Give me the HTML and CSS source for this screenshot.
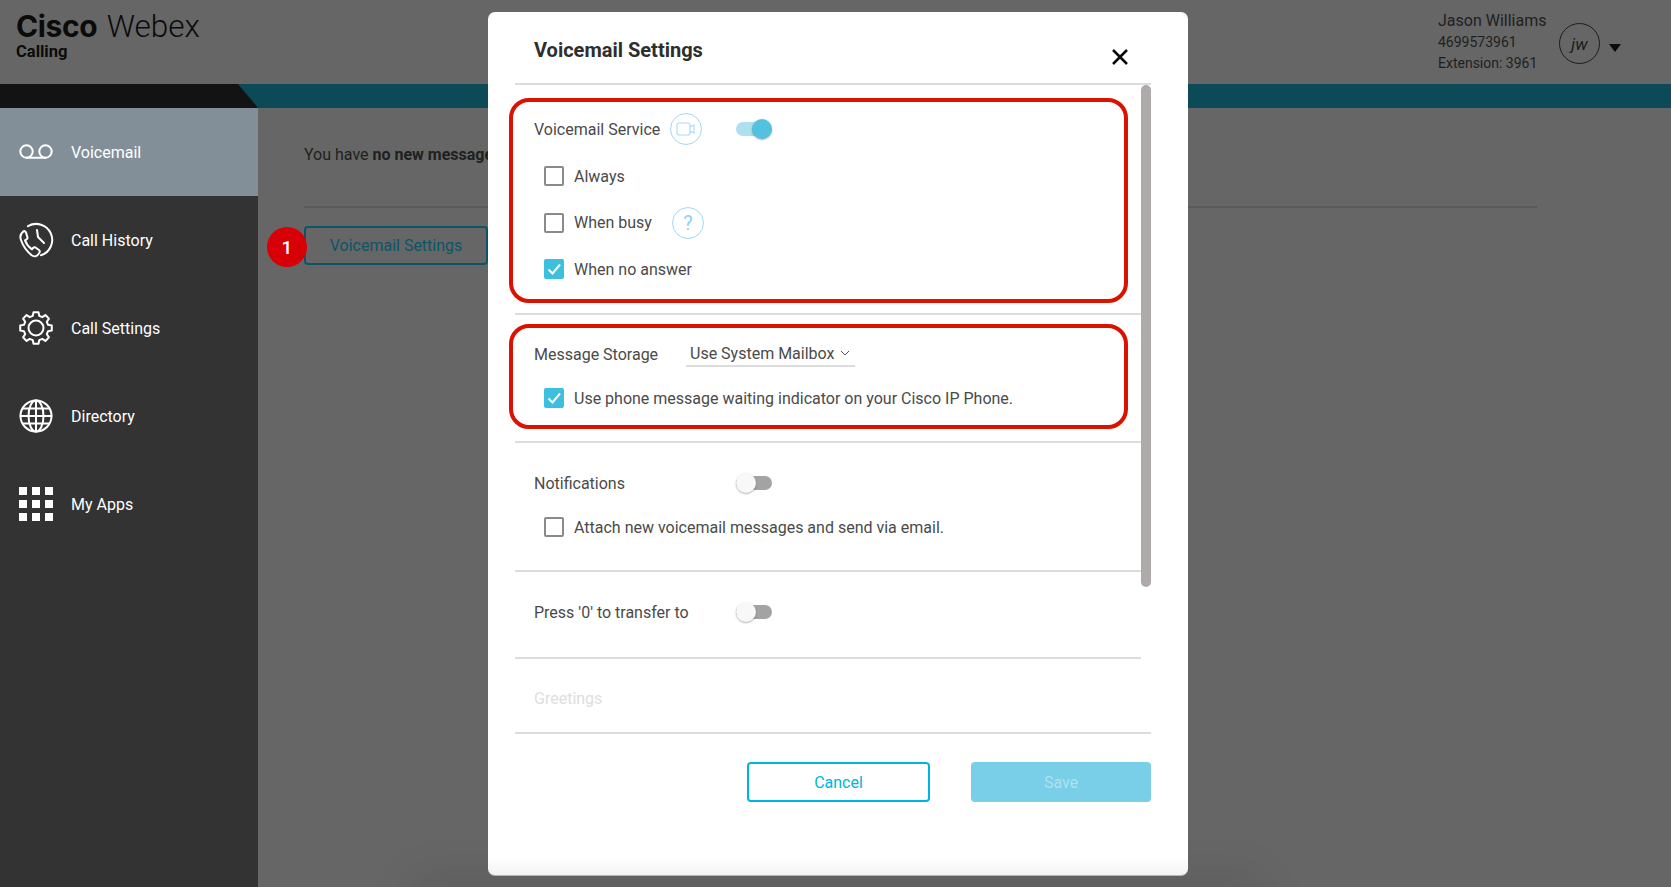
FILE: index.html
```html
<!DOCTYPE html>
<html lang="en">
<head>
<meta charset="utf-8">
<title>Voicemail Settings</title>
<link rel="stylesheet" href="styles.css">
</head>
<body>
<div class="app">
  <header class="topbar">
    <div class="brand">
      <div class="brand-name"><b>Cisco</b> <span>Webex</span></div>
      <div class="brand-sub">Calling</div>
    </div>
    <div class="user">
      <div class="user-info">
        <div class="user-name">Jason Williams</div>
        <div class="user-line">4699573961</div>
        <div class="user-line">Extension: 3961</div>
      </div>
      <div class="avatar">jw</div>
      <div class="caret"></div>
    </div>
  </header>
  <div class="strip"><div class="strip-dark"></div></div>
  <div class="workspace">
    <nav class="sidebar">
      <a class="nav-item active">
        <svg class="nav-icon" viewBox="0 0 34 34"><circle cx="7.500" cy="16.500" r="6.200"/><circle cx="26.500" cy="16.500" r="6.200"/><path d="M7.500 22.700h19"/></svg>
        <span>Voicemail</span>
      </a>
      <a class="nav-item">
        <svg class="nav-icon" viewBox="0 0 34 34"><path d="M9 3.200A16 16 0 1 1 22 32.200"/><path d="M18 7l1 7 6 6"/><path d="M4.500 8.500c-3 2-3.800 5-2.500 8.500 2 6 6 11.500 11 15.500 2.500 1.500 5 1 6.500-1.500l1-1.500c.5-1 .3-1.800-.5-2.500l-3.500-2.500c-1-.5-1.800-.3-2.500.5l-1 1.300c-3-2-5.500-5-7-9l1.500-.8c1-.6 1.200-1.400.9-2.400l-1.400-4.600c-.5-1.300-1.700-1.800-3-1z"/></svg>
        <span>Call History</span>
      </a>
      <a class="nav-item">
        <svg class="nav-icon" viewBox="-17 -17 34 34"><polygon points="12.07,-3.24 15.8,-2.5 15.8,2.5 12.07,3.24 10.83,6.24 12.94,9.4 9.4,12.94 6.24,10.83 3.24,12.07 2.5,15.8 -2.5,15.8 -3.24,12.07 -6.24,10.83 -9.4,12.94 -12.94,9.4 -10.83,6.24 -12.07,3.24 -15.8,2.5 -15.8,-2.5 -12.07,-3.24 -10.83,-6.24 -12.94,-9.4 -9.4,-12.94 -6.24,-10.83 -3.24,-12.07 -2.5,-15.8 2.5,-15.8 3.24,-12.07 6.24,-10.83 9.4,-12.94 12.94,-9.4 10.83,-6.24"/><circle r="7.5"/></svg>
        <span>Call Settings</span>
      </a>
      <a class="nav-item">
        <svg class="nav-icon" viewBox="0 0 34 34"><circle cx="17" cy="17" r="15.500"/><ellipse cx="17" cy="17" rx="7.500" ry="15.500"/><path d="M17 1.500v31M1.500 17h31M4 9.500h26M4 24.500h26"/></svg>
        <span>Directory</span>
      </a>
      <a class="nav-item">
        <div class="apps-grid"><i></i><i></i><i></i><i></i><i></i><i></i><i></i><i></i><i></i></div>
        <span>My Apps</span>
      </a>
    </nav>
    <main class="content">
      <p class="status">You have <b>no new messages</b></p>
      <div class="rule"></div>
      <div class="action"><span class="step">1</span><button class="settings-btn">Voicemail Settings</button></div>
    </main>
  </div>
</div>

<div class="modal">
  <div class="modal-head">
    <h1>Voicemail Settings</h1>
    <svg class="close" viewBox="0 0 16 16"><path d="M1 1l14 14M15 1L1 15"/></svg>
  </div>
  <div class="modal-body">
    <section class="group g1">
      <div class="row">
        <span class="label short">Voicemail Service</span>
        <span class="hint"><svg viewBox="0 0 20 14"><rect x="1" y="1" width="13" height="12" rx="2"/><path d="M14 5l4-2v8l-4-2"/></svg></span>
        <span class="switch on"></span>
      </div>
      <label class="row check"><span class="box"></span>Always</label>
      <label class="row check"><span class="box"></span><span class="busy">When busy</span><span class="hint q">?</span></label>
      <label class="row check"><span class="box checked"><svg viewBox="0 0 20 20"><path d="M4.500 10.500l4 4 7.500-9"/></svg></span>When no answer</label>
    </section>
    <section class="group g2">
      <div class="row">
        <span class="label storage">Message Storage</span>
        <span class="select">Use System Mailbox<svg viewBox="0 0 10 6"><path d="M1 1l4 4 4-4"/></svg></span>
      </div>
      <label class="row check"><span class="box checked"><svg viewBox="0 0 20 20"><path d="M4.500 10.500l4 4 7.500-9"/></svg></span>Use phone message waiting indicator on your Cisco IP Phone.</label>
    </section>
    <section class="group g3">
      <div class="row"><span class="label wide">Notifications</span><span class="switch"></span></div>
      <label class="row check"><span class="box"></span>Attach new voicemail messages and send via email.</label>
    </section>
    <section class="group g4">
      <div class="row"><span class="label wide">Press '0' to transfer to</span><span class="switch"></span></div>
    </section>
    <section class="group g5">
      <div class="row faded">Greetings</div>
    </section>
    <div class="scroll-thumb"></div>
    <div class="callout c1"></div>
    <div class="callout c2"></div>
  </div>
  <div class="modal-foot">
    <button class="btn cancel">Cancel</button>
    <button class="btn save">Save</button>
  </div>
</div>
</body>
</html>
```
FILE: styles.css
```css
* { box-sizing: border-box; }
html, body { margin: 0; height: 100%; overflow: hidden; }
body { font-family: Roboto, "Liberation Sans", sans-serif; background: #666; color: #1c1c1c; }
.app { display: flex; flex-direction: column; height: 887px; }

.topbar { height: 84px; display: flex; justify-content: space-between; }
.brand { padding: 8px 0 0 16px; color: #0b0b0b; }
.brand-name { font-family: Inter, Roboto, sans-serif; font-size: 30px; line-height: 36px; white-space: nowrap; }
.brand-name b { font-weight: 700; letter-spacing: -.4px; }
.brand-name span { font-family: Roboto, sans-serif; font-weight: 300; font-size: 31.500px; margin-left: 1px; }
.brand-sub { font-size: 16.500px; font-weight: 700; line-height: 16px; margin-top: -1px; }
.user { display: flex; align-items: flex-start; padding: 9px 50px 0 0; }
.user-info { width: 121px; color: #1f1f1f; }
.user-name { font-size: 16px; line-height: 23px; }
.user-line { font-size: 14px; line-height: 21px; }
.avatar { width: 41px; height: 41px; border: 1px solid #1c1c1c; border-radius: 50%; display: flex; align-items: center; justify-content: center; font-style: italic; font-size: 17px; margin-top: 14px; }
.caret { width: 0; height: 0; border: 6.500px solid transparent; border-top: 8px solid #0b0b0b; border-bottom: 0; margin: 35px 0 0 9px; }

.strip { height: 24px; background: #0d4a58; }
.strip-dark { width: 258px; height: 24px; background: #131313; clip-path: polygon(0 0, 238px 0, 100% 100%, 0 100%); }

.workspace { flex: 1; display: flex; min-height: 0; }
.sidebar { width: 258px; background: #333; display: flex; flex-direction: column; }
.nav-item { height: 88px; display: flex; align-items: center; gap: 18px; padding-left: 19px; color: #fff; font-size: 16px; }
.nav-item.active { background: #828f99; }
.nav-icon { width: 34px; height: 34px; fill: none; stroke: #fff; stroke-width: 2; stroke-linejoin: round; stroke-linecap: round; flex: none; overflow: visible; }
.apps-grid { width: 34px; display: grid; grid-template-columns: repeat(3, 8px); gap: 5px; flex: none; }
.apps-grid i { width: 8px; height: 8px; background: #fff; }

.content { flex: 1; padding: 37px 134px 0 46px; color: #1f1f1f; }
.status { margin: 0; font-size: 16px; line-height: 20px; }
.rule { height: 2px; background: #5a5a5a; margin-top: 41px; }
.action { position: relative; margin-top: 18px; }
.settings-btn { width: 184px; height: 39px; background: none; border: 2px solid #0d5566; border-radius: 4px; color: #0d5566; font: 16px Roboto, sans-serif; }
.step { position: absolute; left: -37px; top: 1px; width: 40px; height: 40px; border-radius: 50%; background: #d70007; color: #fff; font-weight: 500; font-size: 19px; display: flex; align-items: center; justify-content: center; z-index: 1; }

.modal { position: absolute; left: 488px; top: 12px; width: 700px; height: 864px; background: linear-gradient(#fff 845px, #f3f3f3 863px); border-bottom: 1px solid #b5b5b5; border-radius: 7px; padding: 0 37px 0 27px; color: #4a4a4a; }
.modal::before { content: ""; position: absolute; left: -70px; right: -70px; top: 868px; height: 50px; background: rgba(0,0,0,.1); filter: blur(22px); z-index: -1; }
.modal-head { height: 73px; padding: 24px 0 0 19px; border-bottom: 2px solid #dcdcdc; position: relative; }
.modal-head h1 { margin: 0; font-size: 20px; line-height: 28px; font-weight: 700; color: #2e2e2e; }
.close { position: absolute; left: 597px; top: 37px; width: 16px; height: 16px; fill: none; stroke: #0a0a0a; stroke-width: 2.500; }
.modal-body { position: relative; height: 649px; border-bottom: 2px solid #dcdcdc; }
.group { margin-right: 10px; padding-left: 19px; border-bottom: 2px solid #dcdcdc; }
.g1 { height: 230px; padding-top: 20px; }
.g2 { height: 128px; padding-top: 17px; }
.g3 { height: 129px; padding-top: 18px; }
.g4 { height: 87px; padding-top: 18px; }
.g5 { border: 0; padding-top: 17px; }
.g1 .row { height: 46.500px; }
.g1 .row:first-child { height: 48px; }
.row { height: 44px; display: flex; align-items: center; font-size: 16px; }
.check { padding-left: 10px; }
.box { width: 20px; height: 20px; border: 2px solid #8a8a8a; border-radius: 2px; margin-right: 10px; flex: none; }
.box.checked { background: #3dbfdf; border: 0; }
.box svg { display: block; width: 20px; height: 20px; fill: none; stroke: #fff; stroke-width: 2; }
.label { white-space: nowrap; flex: none; }
.label.short { width: 126px; }
.label.wide { width: 202px; }
.label.storage { width: 152px; }
.hint { width: 32px; height: 32px; border: 1.500px solid #9fd8fb; border-radius: 50%; display: flex; align-items: center; justify-content: center; color: #8fd2f8; font-size: 20px; flex: none; }
.g1 .row:first-child .hint { margin-left: 10px; margin-right: 34px; }
.hint svg { width: 20px; height: 14px; fill: none; stroke: #a9dcfb; stroke-width: 1.200; }
.busy { width: 98px; }
.switch { position: relative; width: 36px; height: 14px; border-radius: 7px; background: #a3a3a3; flex: none; }
.switch::after { content: ""; position: absolute; left: 0; top: -3px; width: 20px; height: 20px; border-radius: 50%; background: #f8f8f8; box-shadow: 0 1px 2px rgba(0,0,0,.3); }
.switch.on { background: #aee0ef; }
.switch.on::after { left: 16px; background: #53c2e0; }
.select { width: 169px; height: 26px; display: flex; align-items: center; justify-content: space-between; padding: 0 5px 0 4px; border-bottom: 2px solid #dcdcdc; white-space: nowrap; }
.select svg { width: 10px; height: 6px; fill: none; stroke: #555; stroke-width: 1; }
.faded { color: #dedede; }
.scroll-thumb { position: absolute; right: 0; top: 0; width: 10px; height: 502px; background: #aeaaaa; border-radius: 5px; }
.callout { position: absolute; left: -6px; width: 619px; border: 4px solid #db1200; border-radius: 20px; }
.c1 { top: 13px; height: 205px; }
.c2 { top: 239px; height: 105px; }
.modal-foot { display: flex; justify-content: flex-end; gap: 41px; padding-top: 28px; }
.btn { height: 40px; border-radius: 4px; font: 16px Roboto, sans-serif; }
.cancel { width: 183px; background: #fff; border: 2px solid #00b5dc; color: #00b5dc; }
.save { width: 180px; background: #78cfe7; border: 0; color: #b0e2ef; }
```
